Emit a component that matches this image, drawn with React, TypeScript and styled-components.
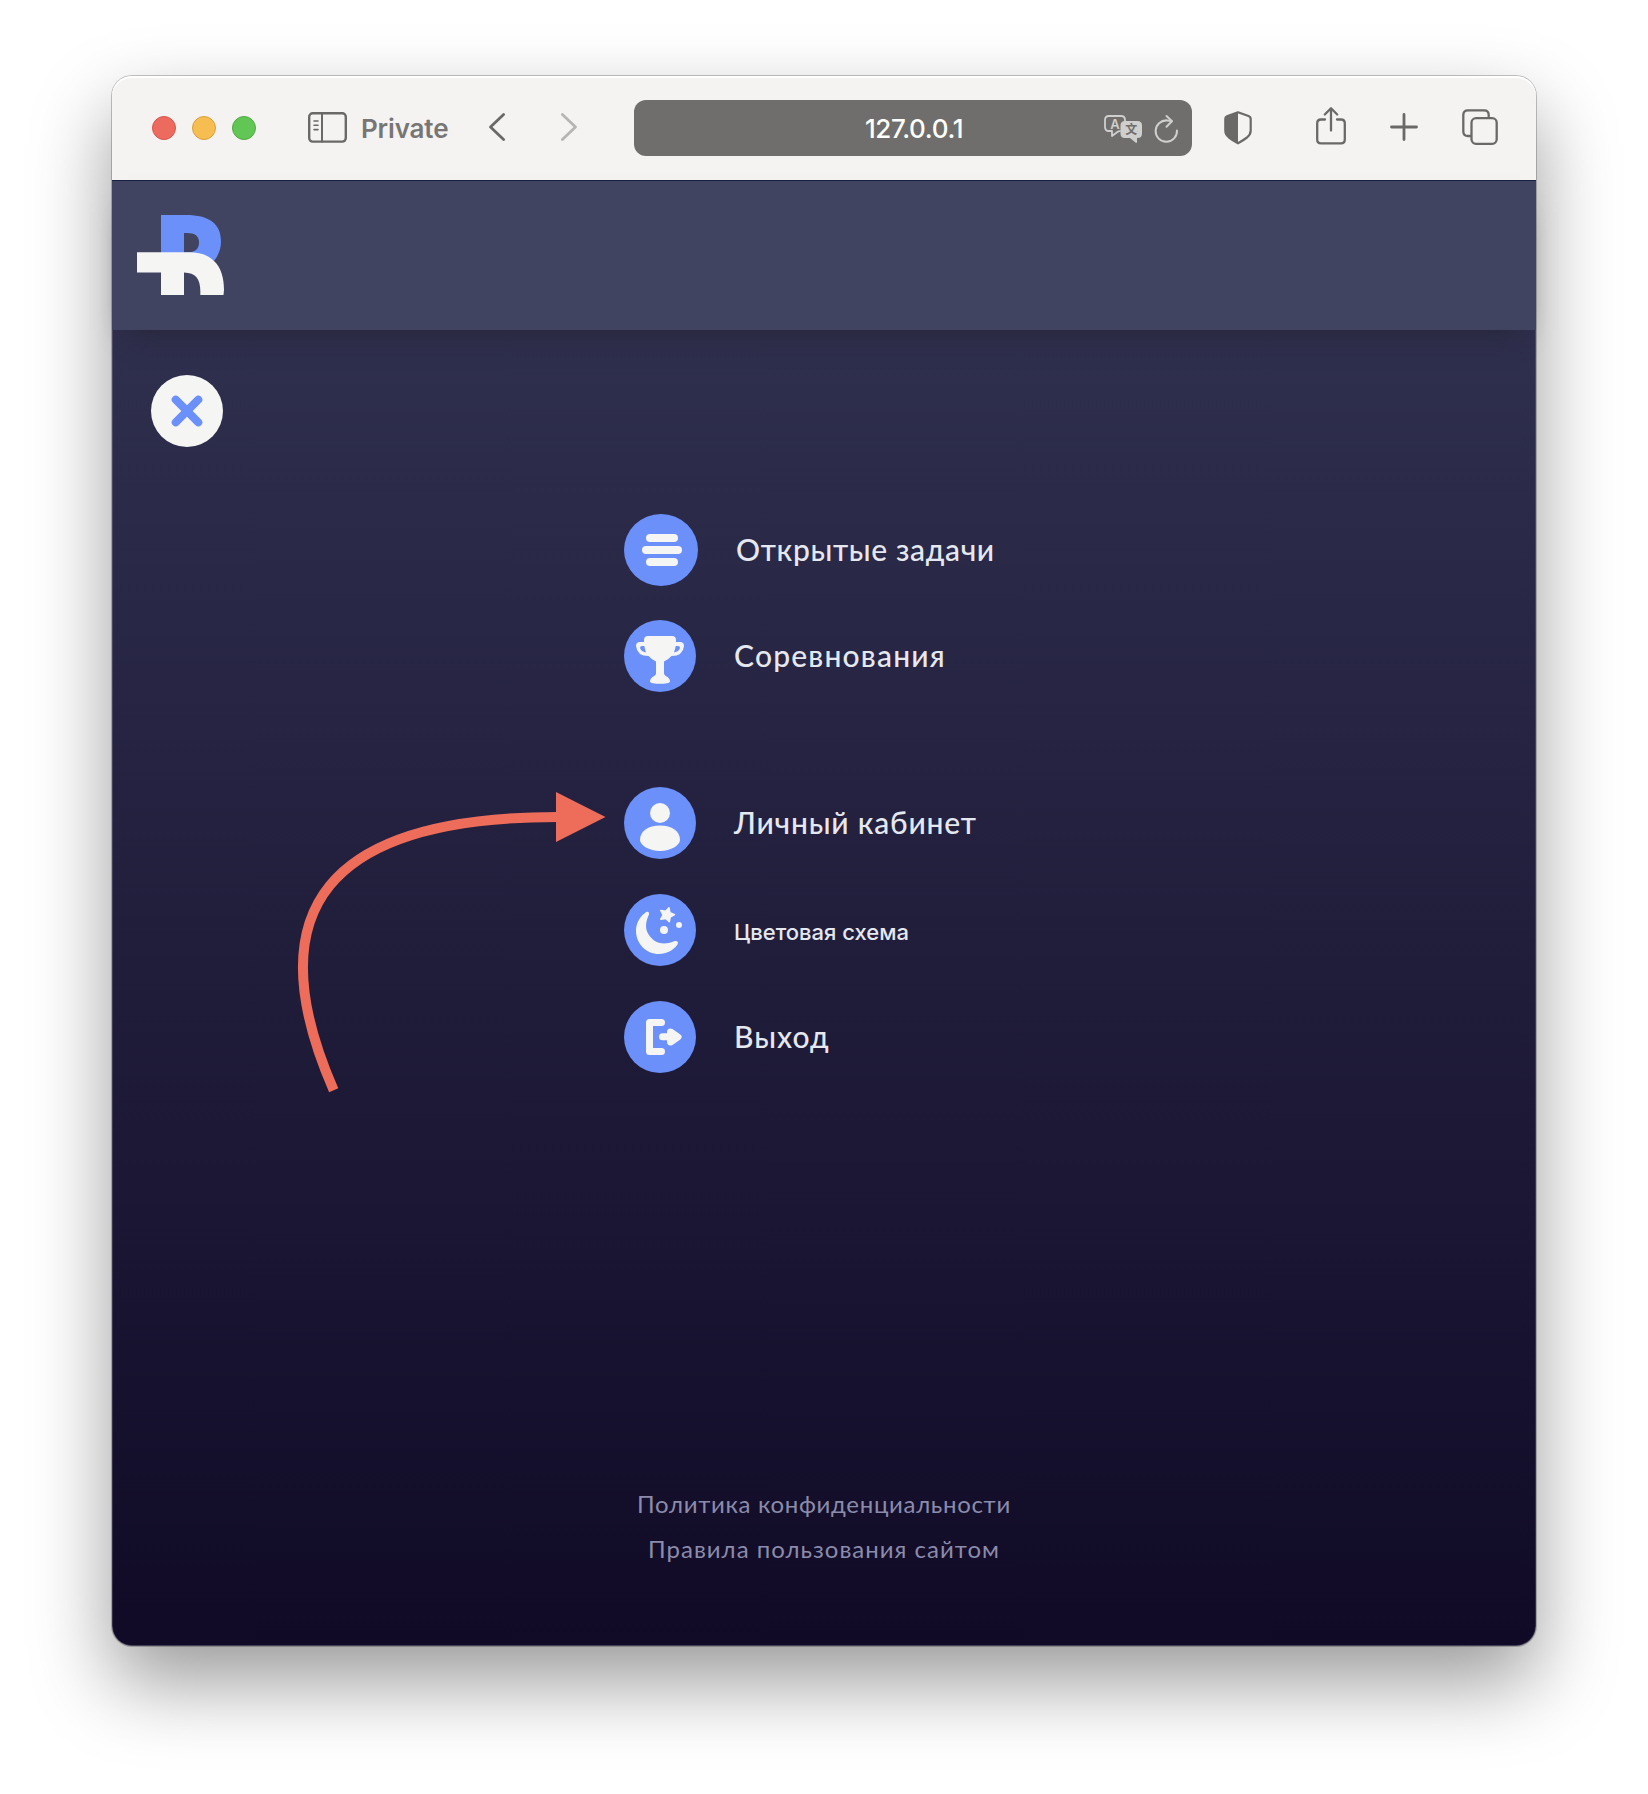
import React from 'react';
import styled, { createGlobalStyle } from 'styled-components';

const GlobalStyle = createGlobalStyle`
  * { box-sizing: border-box; }
  body { margin: 0; background: #fff; }
`;

const Desktop = styled.div`
  width: 1648px;
  height: 1794px;
  padding: 76px 112px 148px;
  overflow: hidden;
`;

const Window = styled.div`
  position: relative;
  display: flex;
  flex-direction: column;
  height: 1570px;
  border-radius: 20px;
  background: #f5f3f2;
  box-shadow: 0 0 0 1px rgba(0, 0, 0, 0.22), 0 36px 80px rgba(0, 0, 0, 0.4);
`;

const Toolbar = styled.div`
  display: flex;
  align-items: center;
  height: 104px;
  flex: none;
  padding: 0 38px 0 40px;
  border-radius: 20px 20px 0 0;
  box-shadow: inset 0 2px 1px #fff;
  color: #6a6967;
  svg { display: block; flex: none; overflow: visible; }
`;

const Lights = styled.div`
  display: flex;
  gap: 16px;
  margin-right: 52px;
`;

const Light = styled.span<{ $fill: string; $edge: string }>`
  width: 24px;
  height: 24px;
  border-radius: 50%;
  background: ${p => p.$fill};
  border: 1px solid ${p => p.$edge};
`;

const ModeLabel = styled.span`
  flex: none;
  width: 142px;
  padding: 2px 0 0 14px;
  font: 600 26px/32px Inter, sans-serif;
  letter-spacing: -0.15px;
  color: #777674;
`;

const NavGroup = styled.div`
  display: flex;
  gap: 56px;
  margin-right: 57px;
`;

const AddressBar = styled.div`
  display: grid;
  grid-template-columns: 1fr auto 1fr;
  align-items: center;
  flex: none;
  width: 558px;
  height: 56px;
  padding: 0 13px;
  border-radius: 12px;
  background: #6f6e6c;
  color: #fff;
  font: 500 26px/32px Inter, sans-serif;
  letter-spacing: -0.35px;
`;

const AddressText = styled.span`
  grid-column: 2;
  padding: 2px 0 0 2px;
`;

const AddressIcons = styled.div`
  display: flex;
  align-items: center;
  justify-content: flex-end;
  gap: 12px;
  padding-top: 2px;
  color: #cfcfce;
`;

const Actions = styled.div`
  display: flex;
  flex: 1;
  align-items: center;
  gap: 44px;
  padding-left: 32px;
`;

const Page = styled.div`
  display: flex;
  flex: 1;
  flex-direction: column;
  border-radius: 0 0 20px 20px;
  background: linear-gradient(180deg, #2f2f4e 150px, #100a26 100%);
  box-shadow: inset 0 -1px 0 rgba(255, 255, 255, 0.22), inset 1px 0 0 rgba(255, 255, 255, 0.14), inset -1px 0 0 rgba(255, 255, 255, 0.14);
`;

const Header = styled.header`
  height: 150px;
  flex: none;
  padding: 34px 25px;
  border-top: 1px solid #191f40;
  background: #404460;
  box-shadow: 0 16px 26px -16px rgba(32, 34, 44, 0.75);
  svg { display: block; }
`;

const CloseButton = styled.button`
  display: flex;
  align-items: center;
  justify-content: center;
  width: 72px;
  height: 72px;
  margin: 45px 0 0 39px;
  padding: 0;
  border: 0;
  border-radius: 50%;
  background: #f5f5f4;
`;

const Menu = styled.nav`
  display: flex;
  flex-direction: column;
  width: 400px;
  margin: 67px 0 0 512px;
`;

const MenuItem = styled.a<{ $after: number }>`
  display: flex;
  align-items: center;
  gap: 38px;
  height: 72px;
  margin-bottom: ${p => p.$after}px;
  svg { display: block; flex: none; }
`;

const MenuLabel = styled.span<{ $small?: boolean; $track: number }>`
  padding: ${p => (p.$small ? '3px 0 0' : '0 0 3px')};
  font: ${p => (p.$small ? '500 22px/28px Inter' : '500 30px/38px Lato')}, 'Open Sans', sans-serif;
  letter-spacing: ${p => p.$track}px;
  color: #e6e8f0;
  white-space: nowrap;
`;

const Footer = styled.footer`
  display: flex;
  flex-direction: column;
  align-items: center;
  margin-top: auto;
  padding-bottom: 75px;
`;

const FooterLink = styled.a<{ $track: number }>`
  font: 400 24px/45px Lato, 'Open Sans', sans-serif;
  letter-spacing: ${p => p.$track}px;
  color: #8b8baa;
`;

const Pointer = styled.svg`
  position: absolute;
  left: 180px;
  top: 706px;
  pointer-events: none;
`;

const stroke = { fill: 'none', stroke: 'currentColor', strokeLinecap: 'round', strokeLinejoin: 'round' } as const;
const BLUE = '#6b90fa';
const LIGHT = '#f5f5f4';

const SidebarIcon = () => (
  <svg width="39" height="32" viewBox="0 0 39 32" {...stroke}>
    <rect x="1.2" y="1.2" width="36.6" height="28.4" rx="3.5" strokeWidth="2.4" />
    <path d="M14 1.5V29.5" strokeWidth="2" />
    <path d="M6 9H10M6 13.3H10M6 17.6H10" strokeWidth="1.6" />
  </svg>
);

const Chevron = ({ dir, color }: { dir: 'left' | 'right'; color: string }) => (
  <svg width="16" height="30" viewBox="0 0 16 30" fill="none" stroke={color} strokeWidth="2.8" strokeLinecap="round" strokeLinejoin="round">
    <path d={dir === 'left' ? 'M14.6 1.5L1.5 14L14.6 26.5' : 'M1.4 1.5L14.5 14L1.4 26.5'} />
  </svg>
);

const TranslateIcon = () => (
  <svg width="39" height="29" viewBox="0 0 39 29">
    <path d="M16 16L14 16.6L8 21V16H5Q1 16 1 12V5Q1 1 5 1H17Q21 1 21 5V6" {...stroke} strokeWidth="1.8" />
    <text x="11" y="13.6" textAnchor="middle" fontFamily="Inter, sans-serif" fontSize="13" fontWeight="600" letterSpacing="0" fill="currentColor">A</text>
    <path d="M21 6H33.500Q38 6 38 10.500V18.500Q38 23 33.500 23H33V27Q32.600 28.500 31.500 27.500L26 23H21Q16.500 23 16.500 18.500V10.500Q16.500 6 21 6Z" fill="currentColor" />
    <text x="27.300" y="19.200" textAnchor="middle" fontFamily="'Noto Sans CJK SC', sans-serif" fontSize="12" fontWeight="700" letterSpacing="0" fill="#6f6e6c">文</text>
  </svg>
);

const ReloadIcon = () => (
  <svg width="24" height="28" viewBox="0 0 24 28" {...stroke} strokeWidth="2">
    <path d="M22 15.500A10.700 10.700 0 1 1 12 5.400L16.500 6" />
    <path d="M11.500 1L17 6.200L11.500 11.700" />
  </svg>
);

const ShieldIcon = styled(({ className }: { className?: string }) => (
  <svg className={className} width="28" height="34" viewBox="0 0 28 34">
    <path d="M14 1.300L24.500 5Q26.700 5.800 26.700 8V19.500Q26.700 23.500 23 26.500Q19 29.500 14 32.300Q9 29.500 5 26.500Q1.300 23.500 1.300 19.500V8Q1.300 5.800 3.500 5Z" {...stroke} strokeWidth="2.200" />
    <path d="M14 1.300L3.500 5Q1.300 5.800 1.300 8V19.500Q1.300 23.500 5 26.500Q9 29.500 14 32.300Z" fill="currentColor" />
  </svg>
))`
  margin-right: 20px;
`;

const ShareIcon = () => (
  <svg width="30" height="40" viewBox="0 2 30 40" {...stroke} strokeWidth="2.300">
    <path d="M9 13.500H5Q1.200 13.500 1.200 17.300V33.500Q1.200 37.300 5 37.300H25Q28.800 37.300 28.800 33.500V17.300Q28.800 13.500 25 13.500H21" />
    <path d="M15 24.500V2.500M8.800 8.500L15 2.300L21.200 8.500" />
  </svg>
);

const PlusIcon = () => (
  <svg width="28" height="30" viewBox="0 0 28 30" {...stroke} strokeWidth="2.800">
    <path d="M14 1.500V26.500M1.500 14H26.500" />
  </svg>
);

const TabsIcon = () => (
  <svg width="36" height="38" viewBox="0 1 36 38" {...stroke} strokeWidth="2.300">
    <path d="M8.500 28H6Q1.300 28 1.300 23.500V7Q1.300 2.400 6 2.400H22Q26.700 2.400 26.700 7V9.500" />
    <rect x="9.500" y="10.200" width="25.200" height="25.600" rx="4.500" />
  </svg>
);

const Logo = () => (
  <svg width="87" height="80" viewBox="0 0 87 80">
    <path fill={BLUE} fillRule="evenodd" d="M24 0H49C72 0 84 8.500 84 26.500C84 34 81 41 77 46L60 42H24ZM47 18V37.500H50C58 37.500 62 34 62 27.500C62 21 58 18 50 18Z" />
    <path fill={LIGHT} d="M0 37.300H52C63 37.300 71 40 77 46C84 52.500 87 63 87 75L86.500 80H63.300C64 64 59.500 58 47 57.500V80H24V57.500H0Z" />
  </svg>
);

const TasksIcon = () => (
  <svg width="74" height="72" viewBox="0 0 74 72">
    <ellipse cx="37" cy="36" rx="37" ry="36" fill={BLUE} />
    <g fill={LIGHT}>
      <rect x="22" y="20" width="32" height="8" rx="4" />
      <rect x="18" y="32" width="40" height="8" rx="4" />
      <rect x="22" y="44" width="32" height="8" rx="4" />
    </g>
  </svg>
);

const Disc = ({ children }: { children: React.ReactNode }) => (
  <svg width="72" height="72" viewBox="0 0 72 72">
    <circle cx="36" cy="36" r="36" fill={BLUE} />
    <g fill={LIGHT}>{children}</g>
  </svg>
);

const TrophyIcon = () => (
  <Disc>
    <path d="M24 16H48Q52 16 52 20V22H56Q60 22 60 26Q59 36 47.500 36Q44 40 40 41.500V54Q41 56 43.500 57Q46 59 46 61Q46 63 43 63.300Q36 64.300 29 63.300Q26 63 26 61Q26 59 28.500 57Q31 56 32 54V41.500Q28 40 24.500 36Q13 36 12 26Q12 22 16 22H20V20Q20 16 24 16Z" />
    <path fill={BLUE} d="M20.300 26H18Q16 26 16 28Q17 31.500 22 32.500Q20.800 29 20.300 26ZM51.700 26H54Q56 26 56 28Q55 31.500 50 32.500Q51.200 29 51.700 26Z" />
  </Disc>
);

const UserIcon = () => (
  <Disc>
    <circle cx="36" cy="26" r="10" />
    <path d="M36 38.500C48 38.500 56 44 56 53C56 58 47 64 36 64C25 64 16 58 16 53C16 44 24 38.500 36 38.500Z" />
  </Disc>
);

const MoonIcon = () => (
  <Disc>
    <path d="M20.500 19.500C22.500 17 26 17 24.800 21C20.500 30 21.500 37 26 42.500C31.500 49.500 40 51.500 50 47.300C53 46.500 55 47.800 53.500 50.500C49 56.500 42.500 60 35 60C22 60 12 49.500 12 37C12 30 15 23.500 20.500 19.500Z" />
    <circle cx="40" cy="36" r="4" />
    <circle cx="55" cy="31" r="3" />
    <path stroke={LIGHT} strokeWidth="1.500" strokeLinejoin="round" d="M45 13.800L46 18.800L50.500 20.700L46.200 23.200L45.300 27.800L41.800 24.500L36.800 25.200L39 21L36.800 16.500L41.600 17.300Z" />
  </Disc>
);

const ExitIcon = () => (
  <Disc>
    <path d="M25.500 18H37.500A3.500 3.500 0 0 1 37.500 25H29V47H37.500A3.500 3.500 0 0 1 37.500 54H25.500Q22 54 22 50.500V21.500Q22 18 25.500 18Z" />
    <path d="M38.500 32.300H43V31C43 28 45.500 26.500 48.500 28L56 33.300Q59.500 36 56 38.700L48.500 44C45.500 45.500 43 44 43 41V39.300H38.500A3.500 3.500 0 0 1 38.500 32.300Z" />
  </Disc>
);

const items = [
  { label: 'Открытые задачи', icon: <TasksIcon />, after: 34, track: 0.65 },
  { label: 'Соревнования', icon: <TrophyIcon />, after: 95, track: 1.2 },
  { label: 'Личный кабинет', icon: <UserIcon />, after: 35, track: 0.8 },
  { label: 'Цветовая схема', icon: <MoonIcon />, after: 35, track: 0, small: true },
  { label: 'Выход', icon: <ExitIcon />, after: 0, track: 1 },
];

const links = [
  { label: 'Политика конфиденциальности', track: 0.67 },
  { label: 'Правила пользования сайтом', track: 1 },
];

export default function App() {
  return (
    <Desktop>
      <GlobalStyle />
      <Window>
        <Toolbar>
          <Lights>
            <Light $fill="#ed6a5f" $edge="#d9544b" />
            <Light $fill="#f6be50" $edge="#d9a03c" />
            <Light $fill="#62c655" $edge="#4fa93f" />
          </Lights>
          <SidebarIcon />
          <ModeLabel>Private</ModeLabel>
          <NavGroup>
            <Chevron dir="left" color="#6a6967" />
            <Chevron dir="right" color="#b6b5b3" />
          </NavGroup>
          <AddressBar>
            <AddressText>127.0.0.1</AddressText>
            <AddressIcons>
              <TranslateIcon />
              <ReloadIcon />
            </AddressIcons>
          </AddressBar>
          <Actions>
            <ShieldIcon />
            <ShareIcon />
            <PlusIcon />
            <TabsIcon />
          </Actions>
        </Toolbar>
        <Page>
          <Header>
            <Logo />
          </Header>
          <CloseButton aria-label="Закрыть">
            <svg width="32" height="32" viewBox="0 0 32 32" stroke={BLUE} strokeWidth="8" strokeLinecap="round">
              <path d="M4.700 4.700L27.300 27.300M27.300 4.700L4.700 27.300" />
            </svg>
          </CloseButton>
          <Menu>
            {items.map(item => (
              <MenuItem key={item.label} $after={item.after}>
                {item.icon}
                <MenuLabel $small={item.small} $track={item.track}>{item.label}</MenuLabel>
              </MenuItem>
            ))}
          </Menu>
          <Footer>
            {links.map(link => (
              <FooterLink key={link.label} $track={link.track}>{link.label}</FooterLink>
            ))}
          </Footer>
        </Page>
        <Pointer width="320" height="320" viewBox="292 782 320 320">
          <path d="M333.700 1090.300Q214.500 817 557 817" fill="none" stroke="#ed6c5a" strokeWidth="10" />
          <path d="M556 792L605.500 817L556 842Z" fill="#ed6c5a" />
        </Pointer>
      </Window>
    </Desktop>
  );
}
